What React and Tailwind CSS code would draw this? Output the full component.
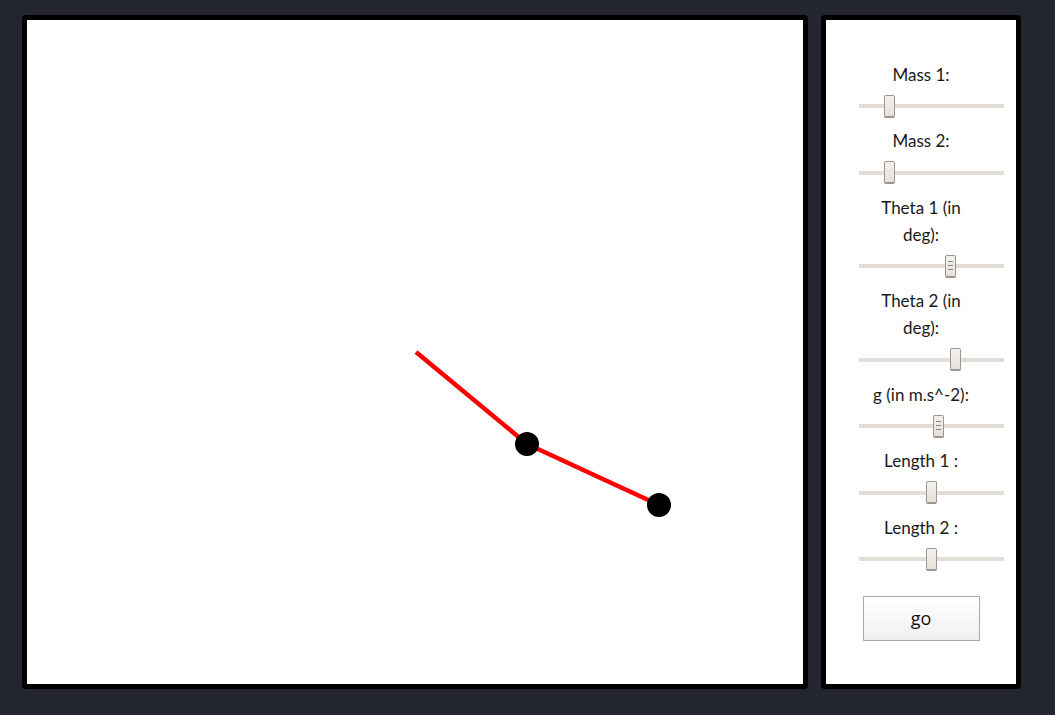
import React from "react";

const sliders = [
  { label: "Mass 1:", pos: 30, grip: false },
  { label: "Mass 2:", pos: 30, grip: false },
  { label: "Theta 1 (in deg):", pos: 91, grip: true },
  { label: "Theta 2 (in deg):", pos: 96, grip: false },
  { label: "g (in m.s^-2):", pos: 79, grip: true },
  { label: "Length 1 :", pos: 72, grip: false },
  { label: "Length 2 :", pos: 72, grip: false },
];

/* ================= SLIDER ================= */
function Slider({ label, pos, grip }) {
  return (
    <div className="flex flex-col">
      <div className="w-[112px] mx-auto text-center text-[17px] leading-[27px] text-[#1a1a1a]">
        {label}
      </div>
      <div className="relative h-[23px] mt-[7px] mb-[9.5px] ml-[33px] w-[145px] flex items-center">
        <div className="h-[4px] w-full bg-[#e2ded7]" />
        <div
          className="absolute top-0 h-[23px] w-[11px] rounded-[2px] border border-[#9c968e] border-b-2 bg-gradient-to-b from-[#f3f1ee] to-[#e5e1da] flex flex-col items-center justify-center gap-[3px]"
          style={{ left: pos - 5 }}
        >
          {grip && (
            <>
              <span className="block w-[5px] h-px bg-[#8a847c]" />
              <span className="block w-[5px] h-px bg-[#8a847c]" />
              <span className="block w-[5px] h-px bg-[#8a847c]" />
            </>
          )}
        </div>
      </div>
    </div>
  );
}

/* ================= MAIN ================= */
export default function App() {
  return (
    <div
      className="w-[1055px] h-[715px] bg-[#23262e] flex gap-[13px] pt-[15px] pl-[22px]"
      style={{ fontFamily: "Lato, 'Open Sans', sans-serif" }}
    >
      {/* CANVAS */}
      <div className="w-[786px] h-[674px] border-[5px] border-black rounded-[4px] bg-white overflow-hidden">
        <svg width="776" height="664" viewBox="0 0 776 664">
          <line x1="389" y1="332" x2="500" y2="424" stroke="#ff0000" strokeWidth="4.5" />
          <line x1="500" y1="424" x2="632" y2="485" stroke="#ff0000" strokeWidth="4.5" />
          <circle cx="500" cy="424" r="12" fill="#000" />
          <circle cx="632" cy="485" r="12" fill="#000" />
        </svg>
      </div>

      {/* CONTROLS */}
      <div className="w-[200px] h-[674px] border-[5px] border-black rounded-[4px] bg-white pt-[40.5px] flex flex-col">
        {sliders.map((s) => (
          <Slider key={s.label} {...s} />
        ))}
        <button
          className="mt-[16px] mx-auto w-[117px] h-[45px] border border-[#aaaaaa] bg-gradient-to-b from-white to-[#f0f0f0] text-[18px] text-[#111]"
          style={{ fontFamily: "'Open Sans', sans-serif" }}
        >
          go
        </button>
      </div>
    </div>
  );
}
